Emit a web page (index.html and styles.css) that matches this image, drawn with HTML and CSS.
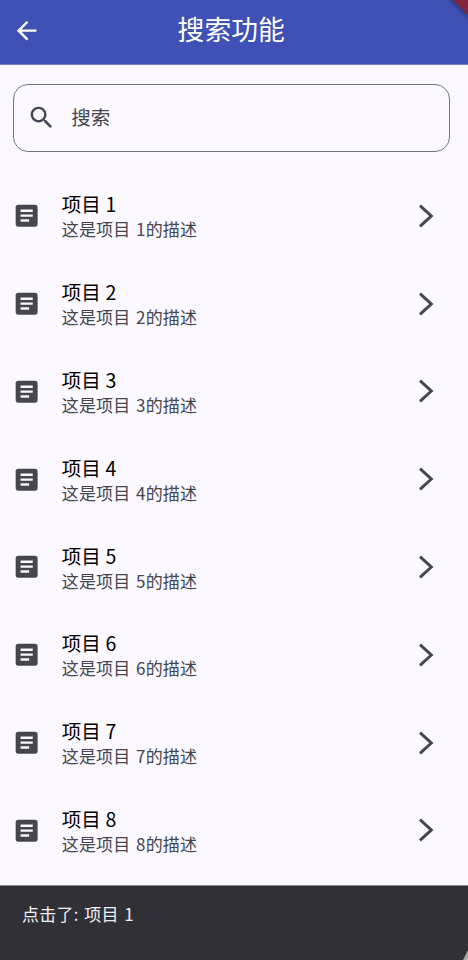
FILE: index.html
```html
<!DOCTYPE html>
<html lang="zh-CN">
<head>
    <meta charset="UTF-8">
    <meta name="viewport" content="width=device-width, initial-scale=1.0">
    <title>搜索功能</title>
    <link rel="stylesheet" href="styles.css">
</head>
<body>
    <svg class="icon-defs" width="0" height="0">
        <symbol id="article" viewBox="0 0 24 24">
            <path d="M19 3H5c-1.100 0-2 .9-2 2v14c0 1.100.9 2 2 2h14c1.100 0 2-.9 2-2V5c0-1.100-.9-2-2-2zm-5 14H7v-2h7v2zm3-4H7v-2h10v2zm0-4H7V7h10v2z"/>
        </symbol>
        <symbol id="chevron" viewBox="0 0 18 26">
            <path d="M3 2.600L14.300 13L3 23.400" fill="none" stroke="currentColor" stroke-width="3" stroke-linejoin="miter"/>
        </symbol>
    </svg>

    <div class="app">
        <header class="app-bar">
            <svg class="icon back-icon" viewBox="0 0 24 24"><path d="M20 11H7.830l5.590-5.590L12 4l-8 8 8 8 1.410-1.410L7.830 13H20v-2z"/></svg>
            <h1>搜索功能</h1>
            <div class="debug-banner"></div>
        </header>

        <div class="search-box">
            <svg class="icon" viewBox="0 0 24 24"><path d="M15.500 14h-.79l-.28-.27C15.410 12.590 16 11.110 16 9.500 16 5.910 13.090 3 9.500 3S3 5.910 3 9.500 5.910 16 9.500 16c1.610 0 3.090-.59 4.230-1.570l.27.28v.79l5 4.990L20.490 19l-4.990-5zm-6 0C7.010 14 5 11.990 5 9.500S7.010 5 9.500 5 14 7.010 14 9.500 11.990 14 9.500 14z"/></svg>
            <span>搜索</span>
        </div>

        <ul class="item-list">
            <li class="item">
                <svg class="icon"><use href="#article"/></svg>
                <div class="item-text">
                    <div class="item-title">项目 1</div>
                    <div class="item-desc">这是项目 1的描述</div>
                </div>
                <svg class="chevron"><use href="#chevron"/></svg>
            </li>
            <li class="item">
                <svg class="icon"><use href="#article"/></svg>
                <div class="item-text">
                    <div class="item-title">项目 2</div>
                    <div class="item-desc">这是项目 2的描述</div>
                </div>
                <svg class="chevron"><use href="#chevron"/></svg>
            </li>
            <li class="item">
                <svg class="icon"><use href="#article"/></svg>
                <div class="item-text">
                    <div class="item-title">项目 3</div>
                    <div class="item-desc">这是项目 3的描述</div>
                </div>
                <svg class="chevron"><use href="#chevron"/></svg>
            </li>
            <li class="item">
                <svg class="icon"><use href="#article"/></svg>
                <div class="item-text">
                    <div class="item-title">项目 4</div>
                    <div class="item-desc">这是项目 4的描述</div>
                </div>
                <svg class="chevron"><use href="#chevron"/></svg>
            </li>
            <li class="item">
                <svg class="icon"><use href="#article"/></svg>
                <div class="item-text">
                    <div class="item-title">项目 5</div>
                    <div class="item-desc">这是项目 5的描述</div>
                </div>
                <svg class="chevron"><use href="#chevron"/></svg>
            </li>
            <li class="item">
                <svg class="icon"><use href="#article"/></svg>
                <div class="item-text">
                    <div class="item-title">项目 6</div>
                    <div class="item-desc">这是项目 6的描述</div>
                </div>
                <svg class="chevron"><use href="#chevron"/></svg>
            </li>
            <li class="item">
                <svg class="icon"><use href="#article"/></svg>
                <div class="item-text">
                    <div class="item-title">项目 7</div>
                    <div class="item-desc">这是项目 7的描述</div>
                </div>
                <svg class="chevron"><use href="#chevron"/></svg>
            </li>
            <li class="item">
                <svg class="icon"><use href="#article"/></svg>
                <div class="item-text">
                    <div class="item-title">项目 8</div>
                    <div class="item-desc">这是项目 8的描述</div>
                </div>
                <svg class="chevron"><use href="#chevron"/></svg>
            </li>
        </ul>

        <div class="snackbar">点击了: 项目 1<span class="corner"></span></div>
    </div>
</body>
</html>
```
FILE: styles.css
```css
:root {
    --primary: #3f51b5;
    --surface: #fbf8ff;
    --on-surface: #000;
    --on-surface-variant: #45464f;
    --outline: #777680;
    --snackbar: #303036;
}

* {
    box-sizing: border-box;
}

body {
    margin: 0;
    background: var(--surface);
    color: var(--on-surface);
    font-family: 'Noto Sans CJK SC', sans-serif;
}

.app {
    height: 960px;
    display: flex;
    flex-direction: column;
    overflow: hidden;
}

.icon-defs {
    position: absolute;
}

.icon {
    width: 29.3px;
    height: 29.3px;
    flex: none;
    fill: currentColor;
}

/* 顶部栏 */
.app-bar {
    position: relative;
    height: 65px;
    flex: none;
    display: grid;
    grid-template-columns: 42px 1fr 60px;
    align-items: center;
    padding: 0 0 3px 12.400px;
    background: var(--primary);
    border-bottom: 1px solid #7481cb;
    color: #fff;
    overflow: hidden;
}

.app-bar h1 {
    margin: 0;
    padding-bottom: 4px;
    font-size: 26.800px;
    font-weight: 400;
    line-height: 36px;
    text-align: center;
}

/* 右上角斜条 */
.debug-banner {
    position: absolute;
    top: -28px;
    right: -33px;
    width: 80px;
    height: 30px;
    background: #82233f;
    box-shadow: 0 0 6px rgba(0, 0, 0, 0.5);
    transform: rotate(45deg);
}

/* 搜索框 */
.search-box {
    height: 68px;
    flex: none;
    display: flex;
    align-items: center;
    gap: 15px;
    margin: 19px 18px 0 12.500px;
    padding-left: 13.500px;
    border: 1px solid var(--outline);
    border-radius: 15px;
    color: var(--on-surface-variant);
    font-size: 19.500px;
}

.search-box span {
    padding-bottom: 3px;
}

/* 列表 */
.item-list {
    flex: 1;
    min-height: 0;
    margin: 20px 0 0;
    padding: 0;
    list-style: none;
    overflow: hidden;
}

.item {
    height: 87.800px;
    display: flex;
    align-items: center;
    padding: 0 33px 0 12.400px;
    color: var(--on-surface-variant);
}

.item-text {
    flex: 1;
    margin-left: 20px;
}

.item-title {
    color: var(--on-surface);
    font-size: 19.500px;
    line-height: 27px;
    word-spacing: 0.500px;
}

.item-desc {
    font-size: 17px;
    line-height: 24px;
    letter-spacing: 0.2px;
    word-spacing: 1.500px;
}

.chevron {
    width: 18px;
    height: 26px;
    flex: none;
}

/* 底部提示 */
.snackbar {
    position: relative;
    height: 75px;
    flex: none;
    padding: 15px 22px;
    background: var(--snackbar);
    border-top: 1px solid #88878c;
    color: #f2eff7;
    font-size: 17px;
    line-height: 25px;
    letter-spacing: 0.25px;
    word-spacing: 1.500px;
}

.corner {
    position: absolute;
    right: 0;
    bottom: 0;
    width: 5px;
    height: 10px;
    background: #aaa;
    clip-path: polygon(100% 0, 100% 100%, 0 100%);
}
```
